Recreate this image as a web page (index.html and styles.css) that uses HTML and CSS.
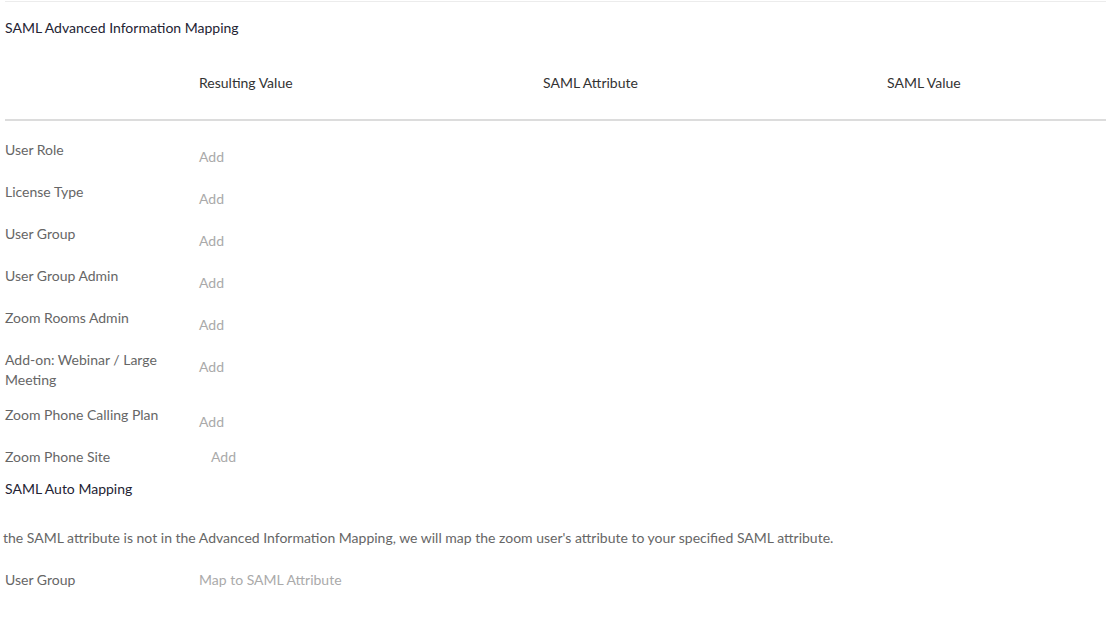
FILE: index.html
```html
<!DOCTYPE html>
<html>
<head>
<meta charset="utf-8">
<link rel="stylesheet" href="styles.css">
</head>
<body>
<div class="page">
  <div class="top-rule"></div>
  <h3 class="section-title">SAML Advanced Information Mapping</h3>
  <div class="map-head">
    <div class="col-label"></div>
    <div class="col col-result">Resulting Value</div>
    <div class="col col-attr">SAML Attribute</div>
    <div class="col col-value">SAML Value</div>
  </div>
  <div class="map-rows">
    <div class="map-row"><div class="row-label">User Role</div><div class="row-add">Add</div></div>
    <div class="map-row"><div class="row-label">License Type</div><div class="row-add">Add</div></div>
    <div class="map-row"><div class="row-label">User Group</div><div class="row-add">Add</div></div>
    <div class="map-row"><div class="row-label">User Group Admin</div><div class="row-add">Add</div></div>
    <div class="map-row"><div class="row-label">Zoom Rooms Admin</div><div class="row-add">Add</div></div>
    <div class="map-row"><div class="row-label">Add-on: Webinar / Large Meeting</div><div class="row-add">Add</div></div>
    <div class="map-row"><div class="row-label">Zoom Phone Calling Plan</div><div class="row-add">Add</div></div>
    <div class="map-row map-row-last"><div class="row-label">Zoom Phone Site</div><div class="row-add row-add-inline">Add</div></div>
  </div>
  <h3 class="section-title auto-title">SAML Auto Mapping</h3>
  <p class="auto-desc">the SAML attribute is not in the Advanced Information Mapping, we will map the zoom user's attribute to your specified SAML attribute.</p>
  <div class="auto-row">
    <div class="row-label">User Group</div>
    <div class="auto-placeholder">Map to SAML Attribute</div>
  </div>
</div>
</body>
</html>
```
FILE: styles.css
```css
html, body {
  margin: 0;
  padding: 0;
  background: #fff;
}
body {
  font-family: Lato, "Open Sans", "Liberation Sans", sans-serif;
  font-size: 14px;
  line-height: 20px;
  color: #666;
}
.page {
  padding-top: 1px;
}
.top-rule {
  margin-left: 5px;
  border-top: 1px solid #ececec;
}
.section-title {
  margin: 16px 0 0 5px;
  font-size: 14px;
  font-weight: normal;
  line-height: 20px;
  color: #232333;
}
.map-head {
  display: flex;
  margin: 35px 0 0 5px;
  padding-bottom: 26px;
  border-bottom: 2px solid #dcdcdc;
  color: #333;
}
.col-label {
  width: 194px;
  flex: none;
}
.col {
  width: 344px;
  flex: none;
}
.col-value {
  flex: 1;
}
.map-rows {
  margin: 19px 0 0 5px;
}
.map-row {
  display: flex;
  margin-bottom: 15px;
}
.map-row-last {
  margin-bottom: 0;
}
.row-label {
  width: 180px;
  padding-right: 14px;
  flex: none;
  color: #666;
}
.row-add {
  padding-top: 7px;
  color: #aaa;
}
.row-add-inline {
  padding-top: 0;
  margin-left: 12px;
}
.auto-title {
  margin-top: 12px;
}
.auto-desc {
  margin: 29px 0 0 3px;
  color: #666;
}
.auto-row {
  display: flex;
  margin: 22px 0 0 5px;
}
.auto-placeholder {
  color: #aaa;
}
```
